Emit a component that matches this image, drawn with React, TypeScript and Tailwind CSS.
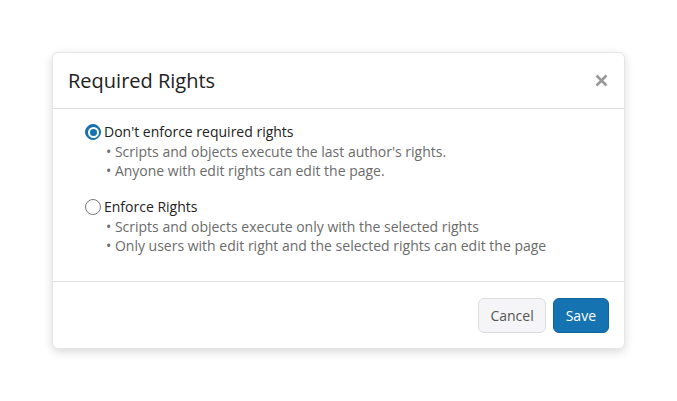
import * as React from 'react';

function Radio({ checked }: { checked?: boolean }) {
  return checked ? (
    <span className="flex h-[16px] w-[16px] shrink-0 items-center justify-center rounded-full border border-[#1a6fa8] bg-[#1673b1]">
      <span className="h-[11px] w-[11px] rounded-full border-[2px] border-white bg-[#1673b1]" />
    </span>
  ) : (
    <span className="h-[16px] w-[16px] shrink-0 rounded-full border border-[#777] bg-white" />
  );
}

function Option({ label, notes, checked }: { label: string; notes: string[]; checked?: boolean }) {
  return (
    <div>
      <label className="flex items-center gap-[3px] text-[14px] leading-[20px] text-[#222]">
        <Radio checked={checked} />
        <span>{label}</span>
      </label>
      <ul className="pl-[21px] text-[14px] leading-[19px] text-[#6b6b6b]">
        {notes.map((n) => (
          <li key={n}>• {n}</li>
        ))}
      </ul>
    </div>
  );
}

export default function App() {
  return (
    <div className="min-h-[401px] bg-white pt-[52px] pl-[52px]" style={{ fontFamily: '"Open Sans", sans-serif' }}>
      <div className="w-[573px] rounded-[6px] border border-[#e6e6e6] bg-white shadow-[0_3px_10px_rgba(0,0,0,0.15)]">
        <div className="flex h-[56px] items-center justify-between border-b border-[#e0e0e0] pl-[15px] pr-[16px]">
          <h2 className="text-[20px] text-[#222]">Required Rights</h2>
          <svg width="13" height="13" viewBox="0 0 13 13" className="mt-[-1px]">
            <path d="M1.5 1.5 L11.5 11.5 M11.5 1.5 L1.5 11.5" stroke="#999" strokeWidth="2.6" strokeLinecap="butt" />
          </svg>
        </div>
        <div className="flex flex-col gap-[17px] pt-[13px] pb-[26px] pl-[32px]">
          <Option
            checked
            label="Don't enforce required rights"
            notes={["Scripts and objects execute the last author's rights.", 'Anyone with edit rights can edit the page.']}
          />
          <Option
            label="Enforce Rights"
            notes={[
              'Scripts and objects execute only with the selected rights',
              'Only users with edit right and the selected rights can edit the page',
            ]}
          />
        </div>
        <div className="flex justify-end gap-[7px] border-t border-[#e0e0e0] px-[15px] pt-[16px] pb-[15px]">
          <button className="h-[35px] rounded-[6px] border border-[#ddd] bg-[#f5f5f7] px-[11px] text-[14px] text-[#555]">Cancel</button>
          <button className="h-[35px] rounded-[6px] border border-[#11649c] bg-[#1673b1] px-[12px] text-[14px] text-white">Save</button>
        </div>
      </div>
    </div>
  );
}
